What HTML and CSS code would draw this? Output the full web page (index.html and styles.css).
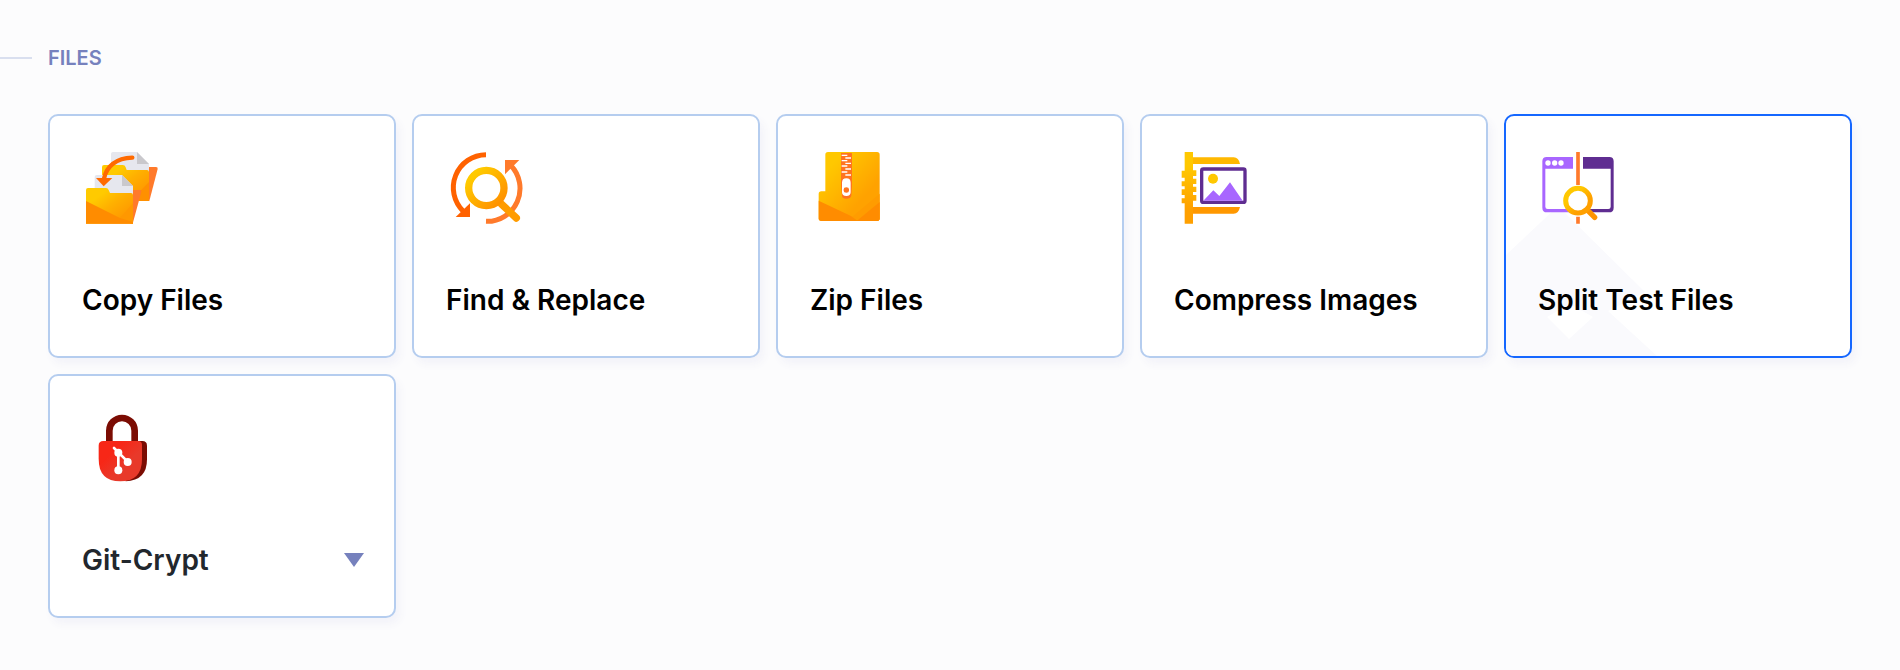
FILE: index.html
```html
<!DOCTYPE html>
<html lang="en">
  <head>
    <meta charset="UTF-8" />
    <meta name="viewport" content="width=device-width, initial-scale=1.0" />
    <title>Files</title>
    <link rel="stylesheet" href="styles.css">
  </head>
  <body>
    <section class="category">
      <h2 class="category-title">FILES</h2>
      <div class="cards">
        <a class="card" href="#copy-files">
          <svg class="icon" viewBox="18 18 240 240" aria-hidden="true">
            <defs>
              <linearGradient id="copy-a" x1="0" y1="0" x2="1" y2="1">
                <stop offset="0.25" stop-color="#ffca00" />
                <stop offset="0.5" stop-color="#ffb000" />
                <stop offset="0.8" stop-color="#ff9a00" />
              </linearGradient>
            </defs>
            <path fill="#ff7a2b" d="M216 75h24q6 0 5 6l-25 96h-6z" />
            <path fill="#e6e7ee" d="M105 36q0-6 6-6h72l36 36v24H105z" />
            <path fill="#c9c8cc" d="M183 30v36h36z" />
            <path fill="url(#copy-a)" d="M78 75q0-6 6-6h56q7 0 9 7l3 8h61q6 0 6 6v87H78z" />
            <path fill="#ff9000" d="M219 120v57h-55z" />
            <path fill="#ff7a2b" d="M170 144h24q3 0 2 5l-26 96h-6z" />
            <path fill="#e6e7ee" d="M56 105q0-6 6-6h76l33 33v27H56z" />
            <path fill="#c9c8cc" d="M138 99v33h33z" />
            <path fill="url(#copy-a)" d="M30 144q0-6 6-6h54q6 0 8 6l4 9h63q6 0 6 6v86H30z" />
            <path fill="#ff9800" d="M132 228l39-45v62z" />
            <path fill="#ff8c00" d="M30 177l102 51 39 12v5H30z" />
            <path fill="none" stroke="#ff6a00" stroke-width="13" stroke-linecap="round" d="M169 47C120 48 91 74 84 110" />
            <path fill="#ff6a00" d="M60 108h49l-26 25z" />
          </svg>
          <span class="name">Copy Files</span>
        </a>

        <a class="card" href="#find-replace">
          <svg class="icon" viewBox="18 18 240 240" aria-hidden="true">
            <defs>
              <linearGradient id="find-a" x1="0" y1="0" x2="1" y2="1">
                <stop offset="0.15" stop-color="#ffca00" />
                <stop offset="0.6" stop-color="#ffa800" />
                <stop offset="1" stop-color="#ff8c00" />
              </linearGradient>
            </defs>
            <path fill="none" stroke="#ff6200" stroke-width="15" d="M138 38A99 99 0 0 0 70 208" />
            <path fill="#ff6200" d="M90 184v41H47z" />
            <path fill="none" stroke="#ff7a2b" stroke-width="15" d="M138 238A99 99 0 0 0 212 70" />
            <path fill="#ff7a2b" d="M195 54h43l-43 43z" />
            <path fill="none" stroke="#ff9c00" stroke-width="22" stroke-linecap="round" d="M184 186l45 42" />
            <circle cx="139" cy="138" r="53" fill="none" stroke="url(#find-a)" stroke-width="22" />
          </svg>
          <span class="name">Find &amp; Replace</span>
        </a>

        <a class="card" href="#zip-files">
          <svg class="icon" viewBox="12 18 240 240" aria-hidden="true">
            <defs>
              <linearGradient id="zip-a" x1="0" y1="0" x2="1" y2="1">
                <stop offset="0.2" stop-color="#ffc800" />
                <stop offset="0.7" stop-color="#ffa200" />
              </linearGradient>
            </defs>
            <path fill="url(#zip-a)" d="M58 38q0-8 8-8h147q8 0 8 8v191q0 8-8 8H46q-8 0-8-8v-73q0-8 8-8h12z" />
            <path fill="#ff9c00" d="M135 227l86-72v74q0 8-8 8h-78z" />
            <path fill="#ff8c00" d="M38 176l97 46 20 15H46q-8 0-8-8z" />
            <path fill="#ff8c00" d="M221 180v49q0 8-8 8h-61z" />
            <path fill="#ff7420" d="M105 33h33v98l-2 30q-2 9-15 9t-13-9l-3-30z" />
            <path stroke="#fff" stroke-width="4" d="M107 40h17M118 48h17M107 56h17M118 64h17M107 72h17M118 81h17M107 90h17M118 99h17" />
            <path fill="#fff" fill-rule="evenodd" d="M108 122q0-13 13-13t13 13v29q0 11-13 11t-13-11zM113 142v4q0 6 8 6t8-6v-4q0-6-8-6t-8 6z" />
          </svg>
          <span class="name">Zip Files</span>
        </a>

        <a class="card" href="#compress-images">
          <svg class="icon" viewBox="12 18 240 240" aria-hidden="true">
            <defs>
              <linearGradient id="press-a" x1="0" y1="0" x2="0" y2="1">
                <stop offset="0.2" stop-color="#ffc800" />
                <stop offset="0.8" stop-color="#ffa000" />
              </linearGradient>
            </defs>
            <path fill="#ffb800" d="M67 46h124q15 0 19 20H67z" />
            <path fill="#ff9800" d="M67 195h143q-4 20-19 20H67z" />
            <path fill="url(#press-a)" d="M44 30h25v55h10v17H69v8h10v16H69v8h10v16H69v9h10v17H69v69H44v-61h-9v-15h9v-10h-9v-17h9v-9h-9v-15h9v-11h-9V86h9z" />
            <rect x="95" y="81" width="130" height="100" rx="5" fill="#fff" stroke="#5f2d91" stroke-width="10" />
            <circle cx="129" cy="110" r="15" fill="#ffc800" />
            <path fill="#a866ff" d="M100 176l30-31 18 17 32-41 38 55z" />
          </svg>
          <span class="name">Compress Images</span>
        </a>

        <a class="card active" href="#split-test-files">
          <svg class="card-shape" viewBox="0 0 152 152" aria-hidden="true">
            <path fill="#fafafd" fill-rule="evenodd" d="M0 51L52 2L139 88L102 107L151 152H0zM41 113L63 135L87 113L64 100z" />
          </svg>
          <svg class="icon" viewBox="12 18 240 240" aria-hidden="true">
            <defs>
              <linearGradient id="split-a" x1="0" y1="0" x2="1" y2="1">
                <stop offset="0.3" stop-color="#ffc800" />
                <stop offset="0.7" stop-color="#ffa000" />
              </linearGradient>
            </defs>
            <path fill="#fff" d="M32 70h200v134H32z" />
            <path fill="#a866ff" fill-rule="evenodd" d="M38 45h79v35H34v114q0 7 7 7h76v10H39q-14 0-14-14V58q0-13 13-13z" />
            <path fill="#5f2d91" d="M147 45h79q13 0 13 13v139q0 14-14 14h-78v-10h76q7 0 7-7V80h-83z" />
            <g fill="#fff">
              <circle cx="42" cy="63" r="8" />
              <circle cx="62" cy="63" r="8" />
              <circle cx="81" cy="63" r="8" />
            </g>
            <path stroke="#ff7a2b" stroke-width="11" d="M132 30v99M132 224v21" />
            <path stroke="#ff9400" stroke-width="16" stroke-linecap="round" d="M162 206l20 20" />
            <circle cx="132" cy="176" r="37" fill="#fff" stroke="url(#split-a)" stroke-width="15" />
          </svg>
          <span class="name">Split Test Files</span>
        </a>

        <button class="card dark" type="button">
          <svg class="icon" viewBox="6 12 240 240" aria-hidden="true">
            <defs>
              <linearGradient id="git-a" x1="0" y1="0" x2="1" y2="1">
                <stop offset="0.3" stop-color="#f72717" />
                <stop offset="0.6" stop-color="#e8392a" />
              </linearGradient>
            </defs>
            <path fill="none" stroke="#7b0c03" stroke-width="20" d="M88 114V80a38 38 0 0 1 76 0v34" />
            <path fill="#7b0c03" d="M120 111h67q14 0 14 14v41q0 64-64 66z" />
            <path fill="url(#git-a)" d="M70 111h104q12 0 12 12v42q0 67-65 67T56 165v-40q0-14 14-14z" />
            <path fill="none" stroke="#fff" stroke-width="8" stroke-linecap="round" d="M102 132l40 40M115 144v55" />
            <g fill="#fff">
              <circle cx="115" cy="146" r="12" />
              <circle cx="143" cy="174" r="12" />
              <circle cx="115" cy="199" r="12" />
            </g>
          </svg>
          <span class="name">Git-Crypt</span>
          <span class="arrow"></span>
        </button>
      </div>
    </section>
  </body>
</html>
```
FILE: styles.css
```css
* {
  box-sizing: border-box;
}
body {
  margin: 0;
  background-color: #fcfcfd;
  font-family: Inter, "Liberation Sans", sans-serif;
}
.category {
  padding: 40px 48px 52px 0;
}
.category-title {
  display: flex;
  align-items: center;
  gap: 16px;
  margin: 0 0 38px;
  font-size: 20px;
  font-weight: 600;
  line-height: 36px;
  color: #7681bd;
}
.category-title::before {
  content: "";
  width: 32px;
  height: 2px;
  background-color: #d9dfef;
}
.cards {
  display: grid;
  grid-template-columns: repeat(5, 1fr);
  gap: 16px;
  padding-left: 48px;
}
.card {
  position: relative;
  display: grid;
  grid-template-columns: 1fr auto;
  align-items: center;
  row-gap: 48px;
  padding: 32px;
  overflow: hidden;
  border: 2px solid #b5cdef;
  border-radius: 10px;
  background-color: #fff;
  box-shadow: 4px 6px 8px #f3f3f9;
  font-family: inherit;
  text-align: left;
  text-decoration: none;
  color: #000;
}
.active {
  border-color: #1567ff;
}
.dark {
  color: #22272d;
}
.icon {
  position: relative;
  grid-column: 1 / -1;
  width: 80px;
  height: 80px;
}
.name {
  position: relative;
  font-size: 28px;
  font-weight: 600;
  line-height: 48px;
  white-space: nowrap;
}
.card-shape {
  position: absolute;
  left: 0;
  bottom: 0;
  width: 152px;
  height: 152px;
}
.arrow {
  margin-right: -2px;
  border-top: 14px solid #7681bd;
  border-left: 10px solid transparent;
  border-right: 10px solid transparent;
}
```
